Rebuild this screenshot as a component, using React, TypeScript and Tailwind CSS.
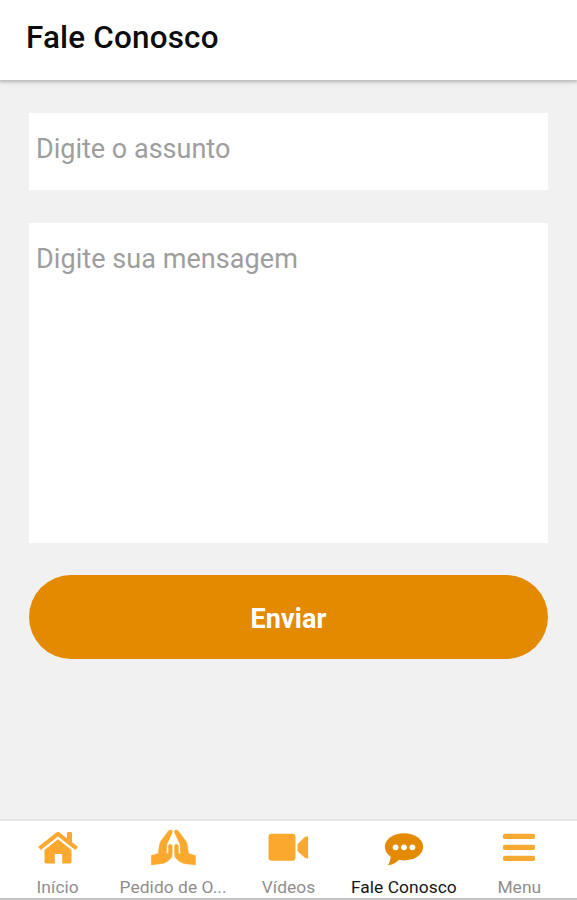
const HomeIcon = () => (
  <svg viewBox="0 0 56 44" className="w-[56px] h-[44px]" fill="#fba92e">
    <path d="M9.4 24.4 L28 9.9 L46.6 24.4" fill="none" stroke="#fba92e" strokeWidth="4" strokeLinejoin="round" />
    <path d="M37 9.2 Q37 8 38.2 8 H40.8 Q42 8 42 9.2 V20.5 L37 16.3 Z" />
    <path d="M28 15.2 L41.5 26 V38 Q41.5 39.4 40.1 39.4 H32.2 V31.2 Q32.2 30 31 30 H26 Q24.8 30 24.8 31.2 V39.4 H15.9 Q14.5 39.4 14.5 38 V26 Z" />
  </svg>
)

const HAND = 'M26.7 6.3 C25.4 5.6 24 5.9 23.2 7.2 L15.6 17.4 C14.3 19.5 13.9 25.5 13.2 29.6 L6.3 31.6 V41 L18.3 39.4 C21.8 38.4 25.9 35.4 26.8 32.6 C27.5 30 27.3 25.5 27.3 22.3 C27.3 19.4 23.4 19.4 23.3 22.3 V28.8 C23.3 30 21.4 30 21.4 28.7 L21.8 20.5 L27.2 8.7 C27.6 7.8 27.5 6.8 26.7 6.3 Z'

const PrayIcon = () => (
  <svg viewBox="0 0 56 44" className="w-[56px] h-[44px]" fill="#fba92e" stroke="#fba92e" strokeWidth="0.4" strokeLinejoin="round">
    <path d={HAND} />
    <path d={HAND} transform="translate(56.8 0) scale(-1 1)" />
  </svg>
)

const VideoIcon = () => (
  <svg viewBox="0 0 56 44" className="w-[56px] h-[44px]" fill="#fba92e">
    <rect x="8.5" y="9.8" width="27" height="27" rx="3.2" />
    <path d="M37.5 20.2 L44.6 13.3 Q45.8 12.3 47 12.3 Q48.1 12.3 48.1 13.5 V33.3 Q48.1 34.5 47 34.5 Q45.8 34.4 44.6 33.4 L37.5 27 Z" />
  </svg>
)

const ChatIcon = () => (
  <svg viewBox="0 0 56 44" className="w-[56px] h-[44px]">
    <ellipse cx="28" cy="22.8" rx="19.2" ry="13.6" fill="#e48a00" />
    <path d="M14 29 C15.5 33 14.5 37 11.8 41.3 C17.5 40.6 21.5 38 24 34.5 Z" fill="#e48a00" />
    <circle cx="19.6" cy="23.3" r="2.9" fill="#fff" />
    <circle cx="28" cy="23.3" r="2.9" fill="#fff" />
    <circle cx="36.4" cy="23.3" r="2.9" fill="#fff" />
  </svg>
)

const MenuIcon = () => (
  <svg viewBox="0 0 56 44" className="w-[56px] h-[44px]" fill="#f8a932">
    <rect x="12" y="9.8" width="32" height="5.2" rx="1.8" />
    <rect x="12" y="20.8" width="32" height="5.2" rx="1.8" />
    <rect x="12" y="31.8" width="32" height="5.2" rx="1.8" />
  </svg>
)

const tabs = [
  { label: 'Início', Icon: HomeIcon },
  { label: 'Pedido de O...', Icon: PrayIcon },
  { label: 'Vídeos', Icon: VideoIcon },
  { label: 'Fale Conosco', Icon: ChatIcon, active: true },
  { label: 'Menu', Icon: MenuIcon },
]

export default function App() {
  return (
    <div className="w-[577px] h-[900px] flex flex-col bg-[#f1f1f1] font-[Roboto,sans-serif]">
      <header className="h-20 bg-white px-[26px] pt-[14px] text-[31.4px] tracking-[0.2px] font-medium text-[#0c0c0c] shadow-[0_1px_4px_1px_rgba(0,0,0,0.26)]">Fale Conosco</header>
      <main className="flex-1 flex flex-col px-[29px] pt-[33px]">
        <input className="h-[77px] bg-white px-[7px] pb-[6px] text-[27px] placeholder:text-[#9e9e9e] outline-none" placeholder="Digite o assunto" />
        <textarea className="h-80 mt-[33px] bg-white px-[7px] pt-[16px] text-[27px] tracking-[0.06px] placeholder:text-[#9e9e9e] outline-none resize-none" placeholder="Digite sua mensagem" />
        <button className="h-[84px] mt-8 pt-[4px] rounded-full bg-[#e48a00] text-white text-[27px] tracking-[0.1px] font-bold">Enviar</button>
      </main>
      <nav className="h-[81px] bg-white grid grid-cols-5 border-t-2 border-[#e6e6e6] border-b-2 border-b-[#c4c4c4]">
        {tabs.map(({ label, Icon, active }) => (
          <button key={label} className="flex flex-col items-center pt-[3px]">
            <Icon />
            <span className={active ? 'mt-[6px] text-[17.4px] leading-[26px] tracking-[0.05px] whitespace-nowrap text-[#161616]' : 'mt-[6px] text-[17.4px] leading-[26px] tracking-[0.05px] whitespace-nowrap text-[#8f8f8f]'}>{label}</span>
          </button>
        ))}
      </nav>
    </div>
  )
}
